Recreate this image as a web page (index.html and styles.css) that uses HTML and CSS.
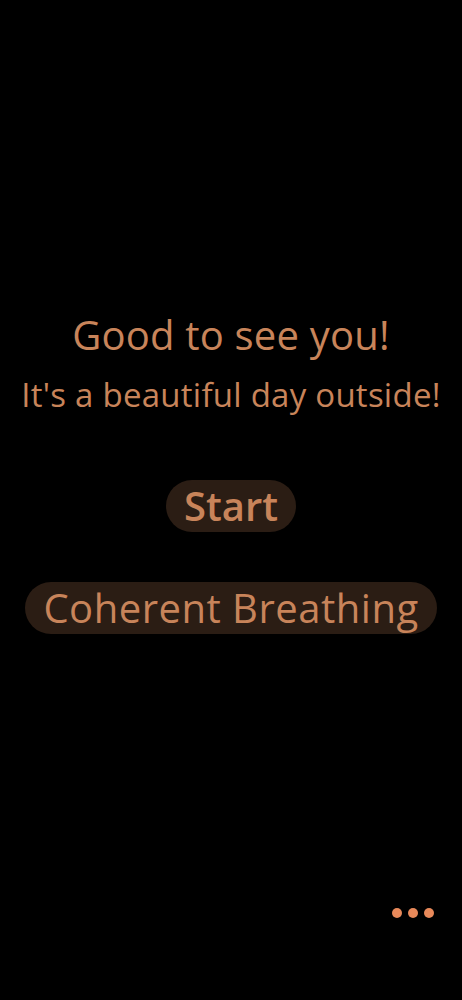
FILE: index.html
```html
<!DOCTYPE html>
<html lang="en">
<head>
<meta charset="utf-8">
<title>Welcome</title>
<link rel="stylesheet" href="styles.css">
</head>
<body>
<main class="screen">
  <section class="welcome">
    <h1 class="greeting">Good to see you!</h1>
    <p class="subtitle">It's a beautiful day outside!</p>
  </section>
  <button class="btn btn-start" type="button">Start</button>
  <button class="btn btn-mode" type="button">Coherent Breathing</button>
  <div class="menu" aria-label="More">
    <span class="dot"></span><span class="dot"></span><span class="dot"></span>
  </div>
</main>
</body>
</html>
```
FILE: styles.css
```css
html, body {
  margin: 0;
  padding: 0;
  background: #000;
}
.screen {
  position: relative;
  width: 462px;
  height: 1000px;
  display: flex;
  flex-direction: column;
  align-items: center;
  font-family: "Open Sans", "Noto Sans", sans-serif;
  color: #c8845a;
}
.welcome {
  margin-top: 310px;
  display: flex;
  flex-direction: column;
  align-items: center;
}
.greeting {
  margin: 0;
  font-size: 40px;
  font-weight: 400;
  line-height: 50px;
  letter-spacing: 0.2px;
  white-space: nowrap;
}
.subtitle {
  margin: 15px 0 0;
  font-size: 33px;
  line-height: 40px;
  letter-spacing: 0.25px;
  white-space: nowrap;
}
.btn {
  border: 0;
  background: #2b1d14;
  color: #c8845a;
  font-family: inherit;
  border-radius: 26px;
  cursor: pointer;
  white-space: nowrap;
}
.btn-start {
  margin-top: 65px;
  height: 52px;
  padding: 0 18px;
  font-size: 40px;
  font-weight: 600;
  line-height: 52px;
}
.btn-mode {
  margin-top: 50px;
  height: 52px;
  padding: 0 18px;
  font-size: 40px;
  font-weight: 400;
  line-height: 52px;
  letter-spacing: 0.5px;
}
.menu {
  position: absolute;
  right: 28px;
  top: 908px;
  display: flex;
  gap: 6px;
}
.dot {
  width: 10px;
  height: 10px;
  border-radius: 50%;
  background: #e8895a;
}
```
